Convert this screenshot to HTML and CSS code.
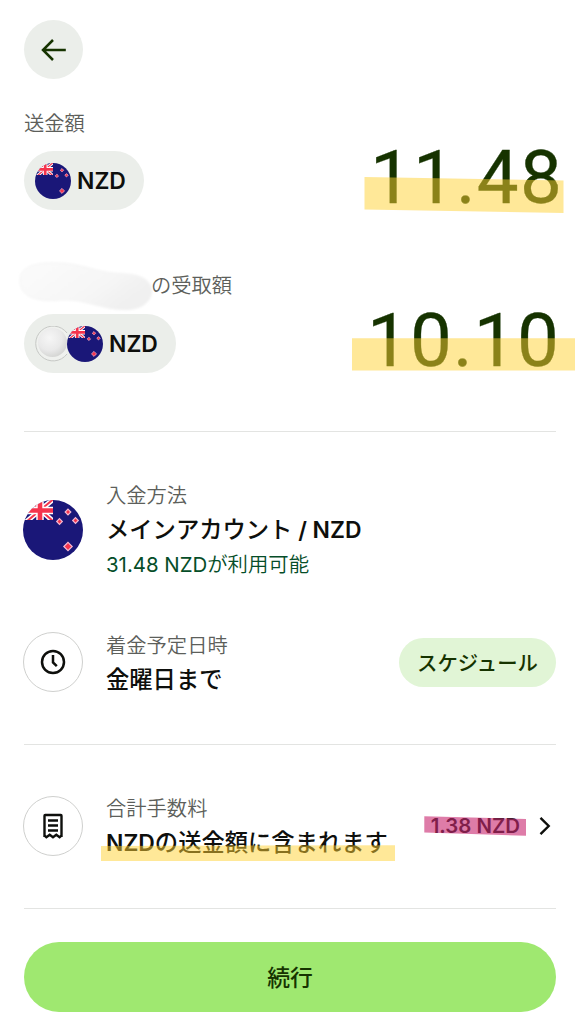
FILE: index.html
```html
<!DOCTYPE html>
<html lang="ja">
<head>
<meta charset="utf-8">
<title>送金</title>
<link rel="stylesheet" href="styles.css">
</head>
<body>
<svg class="defs" width="0" height="0" aria-hidden="true">
  <defs>
    <clipPath id="round"><circle cx="30" cy="30" r="30"/></clipPath>
    <clipPath id="canton"><rect width="30" height="20"/></clipPath>
    <symbol id="nz" viewBox="0 0 60 60">
      <g clip-path="url(#round)">
        <rect width="60" height="60" fill="#1a1778"/>
        <g clip-path="url(#canton)">
          <path d="M3 -3 32 23M33 -3 3 22" stroke="#fff" stroke-width="5"/>
          <path d="M3 -3 32 23M33 -3 3 22" stroke="#f5344d" stroke-width="2"/>
          <path d="M0 10.5H30M17 0V20" stroke="#fff" stroke-width="7.500"/>
          <path d="M0 10.5H30M17 0V20" stroke="#f5344d" stroke-width="4.600"/>
        </g>
        <g fill="#f5344d" stroke="#f4b9d2" stroke-width="1.200">
          <path d="M45 9.200 47.800 12 45 14.800 42.200 12Z"/>
          <path d="M36.500 18.700 39.300 21.500 36.500 24.300 33.700 21.500Z"/>
          <path d="M52.500 17.700 55.300 20.500 52.500 23.300 49.700 20.500Z"/>
          <path d="M45 42.300 49.200 46.500 45 50.700 40.800 46.500Z"/>
        </g>
      </g>
    </symbol>
  </defs>
</svg>
<main class="screen">
  <button class="back" aria-label="戻る">
    <svg width="26" height="22" viewBox="0 0 26 22" fill="none" stroke="#163300" stroke-width="2.500"><path d="M24.800 11H1.800M12 1 2 11l10 10"/></svg>
  </button>

  <section class="amount send">
    <p class="label">送金額</p>
    <div class="amount-row">
      <button class="currency"><svg class="flag"><use href="#nz"/></svg><span>NZD</span></button>
      <div class="value">11.48<svg class="marker marker-send" width="200" height="37" viewBox="0 0 200 37"><path d="M.5 0 199.500 3.500V36L.5 32.500Z"/></svg></div>
    </div>
  </section>

  <section class="amount receive">
    <p class="label label-receive">の受取額
      <svg class="smudge" width="140" height="58" viewBox="0 0 140 58">
        <defs>
          <linearGradient id="smoke" x1="0" y1="0" x2="1" y2=".5"><stop offset="0" stop-color="#fbfbfb"/><stop offset=".6" stop-color="#f7f7f7"/><stop offset="1" stop-color="#f0f0f0"/></linearGradient>
          <filter id="soft" x="-10%" y="-10%" width="120%" height="120%"><feGaussianBlur stdDeviation="1.100"/></filter>
        </defs>
        <path filter="url(#soft)" fill="url(#smoke)" stroke="#f1f1f1" stroke-width=".8" d="M4 22C4 11 15 6 30 5 56 4 68 9 85 13 103 17 116 14 127 20 137 25 138 36 132 43 124 53 108 53 92 50 73 46 62 41 45 42 24 44 4 41 4 22Z"/>
      </svg>
    </p>
    <div class="amount-row">
      <button class="currency">
        <svg class="avatar" viewBox="0 0 36 36">
          <defs><radialGradient id="ball" cx=".4" cy=".35" r=".65"><stop offset="0" stop-color="#f6f6f6"/><stop offset=".65" stop-color="#e9e9e9"/><stop offset="1" stop-color="#d6d7d5"/></radialGradient></defs>
          <path d="M32 7A17.400 17.400 0 1 0 32 28" fill="#eff1ee" stroke="#c6c8c5"/><circle cx="17.500" cy="16.500" r="14.500" fill="url(#ball)"/>
        </svg>
        <svg class="flag flag-front"><use href="#nz"/></svg><span>NZD</span>
      </button>
      <div class="value value-receive">10.10<svg class="marker marker-receive" width="223" height="33" viewBox="0 0 223 33"><path d="M0 .3H223V32.500H0Z"/></svg></div>
    </div>
  </section>

  <hr>

  <section class="row source">
    <svg class="flag-large"><use href="#nz"/></svg>
    <div class="text">
      <p class="label">入金方法</p>
      <p class="title">メインアカウント<span class="latin"> / NZD</span></p>
      <p class="available"><span class="latin">31.48 NZD</span>が利用可能</p>
    </div>
  </section>

  <section class="row arrival">
    <div class="icon"><svg width="26" height="26" viewBox="0 0 26 26" fill="none" stroke="#0e0f0c" stroke-width="2.500"><circle cx="13" cy="13" r="11"/><path d="M13 6V13.500L16.800 17.200"/></svg></div>
    <div class="text">
      <p class="label">着金予定日時</p>
      <p class="title">金曜日まで</p>
    </div>
    <button class="schedule">スケジュール</button>
  </section>

  <hr>

  <section class="row fees">
    <div class="icon"><svg width="22" height="26" viewBox="0 0 22 26" fill="none" stroke="#0e0f0c" stroke-width="2.400"><path d="M2.500 24V2.700Q2.500 2 3.200 2H18.800Q19.500 2 19.500 2.700V24M2.300 22.300 4.400 24.200 7.700 21.800 11 24.200 14.300 21.800 17.600 24.200 19.700 22.300"/><path d="M6 7.500H16M6 12.500H16M6 17.500H16"/></svg></div>
    <div class="text">
      <p class="label">合計手数料</p>
      <p class="title"><span class="latin">NZD</span>の送金額に含まれます<svg class="marker marker-title" width="294" height="17" viewBox="0 0 294 17"><path d="M0 1 294 .2V16H0Z"/></svg></p>
    </div>
    <div class="fee">1.38 NZD<svg class="marker marker-fee" width="102" height="20" viewBox="0 0 102 20"><path d="M.3 .3 102 3V19.700L.3 16.500Z"/></svg></div>
    <svg class="chevron" width="12" height="20" viewBox="0 0 12 20" fill="none" stroke="#0e0f0c" stroke-width="2.400"><path d="M1.500 1.800 9.700 10 1.500 18.200"/></svg>
  </section>

  <hr>

  <button class="continue">続行</button>
</main>
</body>
</html>
```

FILE: styles.css
```css
* { box-sizing: border-box; }
body { margin: 0; background: #fff; font-family: "Noto Sans CJK JP", sans-serif; color: #0e0f0c; }
p { margin: 0; }
button { border: 0; padding: 0; font: inherit; color: inherit; }
.defs { display: block; }
.screen { width: 579px; height: 1024px; padding: 20px 23px 0 24px; overflow: hidden; }
.back { display: flex; align-items: center; justify-content: center; width: 59px; height: 59px; border-radius: 50%; background: #ebeeea; }
.label { font-size: 20.3px; line-height: 30px; font-weight: 350; color: #5d5f5b; }
.latin { font-family: Inter, sans-serif; white-space: pre; }

.send { margin-top: 28px; }
.receive { margin-top: 59px; }
.amount-row { display: flex; justify-content: space-between; height: 59px; margin-top: 14px; }
.receive .amount-row { margin-top: 15px; }
.currency { display: flex; align-items: center; height: 59px; padding: 0 18px 0 11px; border-radius: 30px; background: #ebeeea; font: 600 22.9px/59px Inter, sans-serif; }
.currency span { padding-top: 1px; }
.send .currency { width: 120px; }
.receive .currency { width: 152px; }
.flag { width: 36px; height: 36px; margin-right: 6px; flex: none; }
.avatar { width: 36px; height: 36px; flex: none; }
.flag-front { margin-left: -4px; }
.value { position: relative; margin-right: -7px; font: 74.5px/54px Roboto, sans-serif; font-kerning: none; letter-spacing: 1.200px; color: #163300; white-space: nowrap; -webkit-text-stroke: .3px #163300; }
.value-receive { margin-right: -4px; }
.label-receive { position: relative; padding-left: 127px; }
.smudge { position: absolute; left: -8px; top: -11px; }

.marker { position: absolute; fill: rgba(255, 210, 50, .5); }
.marker-send { right: -1px; top: 26px; }
.marker-receive { right: -15px; top: 24px; }
.marker-title { left: -5px; top: 22px; }
.marker-fee { left: -7px; top: 2px; fill: rgba(198, 29, 105, .58); }

hr { height: 1px; margin: 0; border: 0; background: #e3e4e2; }
.receive + hr { margin-top: 58px; }
.row { display: flex; align-items: center; }
.text { flex: 1; margin-top: 2px; }
.text .label { padding-bottom: 1px; }
.title { position: relative; font-size: 23.3px; line-height: 37px; font-weight: 500; white-space: nowrap; }
.title .latin { font-weight: 600; font-size: 22.9px; }
.source { height: 98px; margin-top: 49px; }
.source .text { align-self: flex-start; margin-top: -2px; }
.flag-large { width: 60px; height: 60px; margin: 0 23px 0 -1px; flex: none; }
.available { font-size: 20.4px; line-height: 28px; font-weight: 350; color: #054d28; }
.available .latin { font-weight: 400; }
.icon { display: flex; align-items: center; justify-content: center; width: 60px; height: 60px; margin: 0 23px 0 -1px; border: 1.500px solid #cfd0ce; border-radius: 50%; flex: none; }
.arrival { height: 66px; margin-top: 50px; }
.schedule { width: 157px; height: 49px; border-radius: 25px; background: #e1f5d6; color: #163300; font-size: 20.4px; line-height: 48px; font-weight: 500; }
.arrival + hr { margin-top: 49px; }
.fees { height: 66px; margin-top: 48px; }
.fee { position: relative; font: 600 20.4px/24px Inter, sans-serif; color: #20221f; margin-right: 19px; white-space: nowrap; }
.chevron { margin-right: 5px; }
.fees + hr { margin-top: 49px; }
.continue { display: block; width: 532px; height: 70px; margin-top: 33px; border-radius: 35px; background: #9fe870; color: #163300; font-size: 22.8px; line-height: 70px; font-weight: 500; }
```
